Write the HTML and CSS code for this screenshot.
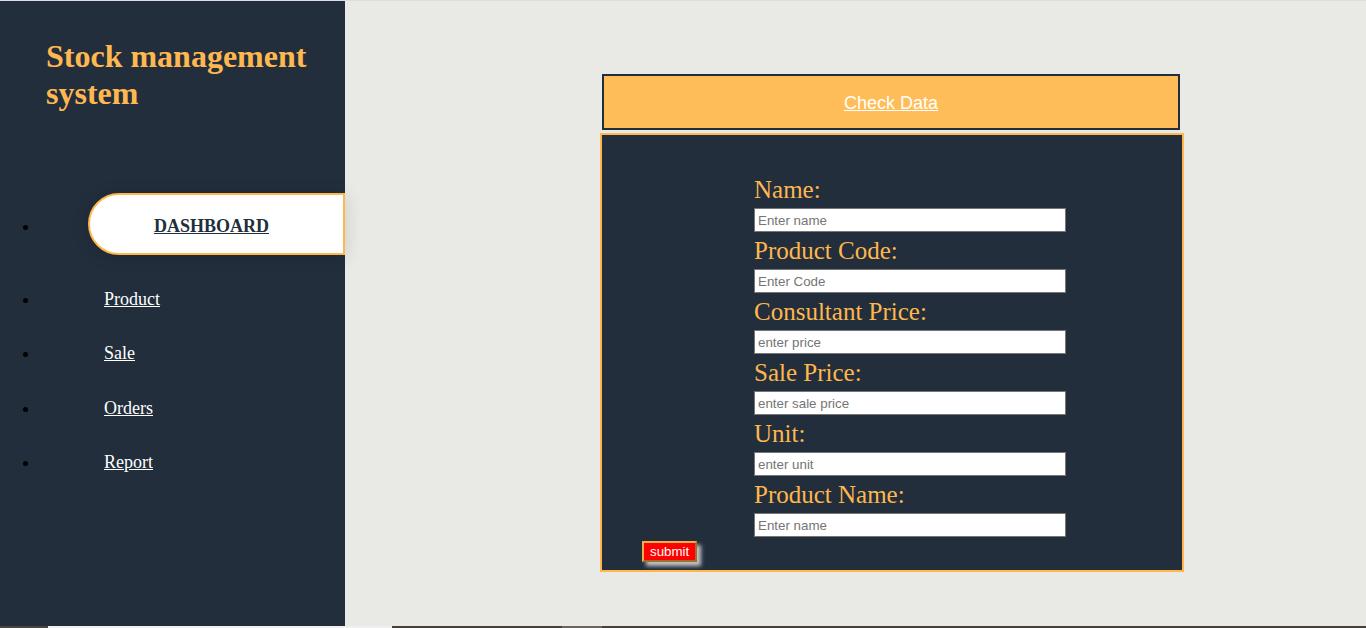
FILE: index.html
```html
<!DOCTYPE html>
<html lang="en">
<head>
<meta charset="utf-8">
<title>Stock management system</title>
<link rel="stylesheet" href="styles.css">
</head>
<body>
<aside class="sidebar">
  <h1 class="brand">Stock management system</h1>
  <ul class="nav">
    <li><a class="nav-link active" href="#">DASHBOARD</a></li>
    <li><a class="nav-link" href="#">Product</a></li>
    <li><a class="nav-link" href="#">Sale</a></li>
    <li><a class="nav-link" href="#">Orders</a></li>
    <li><a class="nav-link" href="#">Report</a></li>
  </ul>
</aside>
<main class="main">
  <div class="check"><a href="#">Check Data</a></div>
  <form class="form">
    <div class="fields">
      <label class="label">Name:</label>
      <input class="input" type="text" placeholder="Enter name">
      <label class="label">Product Code:</label>
      <input class="input" type="text" placeholder="Enter Code">
      <label class="label">Consultant Price:</label>
      <input class="input" type="text" placeholder="enter price">
      <label class="label">Sale Price:</label>
      <input class="input" type="text" placeholder="enter sale price">
      <label class="label">Unit:</label>
      <input class="input" type="text" placeholder="enter unit">
      <label class="label">Product Name:</label>
      <input class="input" type="text" placeholder="Enter name">
    </div>
    <div class="actions"><button class="submit" type="button">submit</button></div>
  </form>
</main>
<div class="hscroll"></div>
</body>
</html>
```
FILE: styles.css
```css
html, body {
  margin: 0;
  padding: 0;
}
body {
  border-top: 1px solid #dcdce2;
  background: #e9e9e6;
  display: flex;
  align-items: flex-start;
  height: calc(100vh - 1px);
  overflow: hidden;
  font-family: "Liberation Serif", "Times New Roman", serif;
}
.sidebar {
  width: 345px;
  flex-shrink: 0;
  height: 100%;
  background: #222e3c;
  position: relative;
  z-index: 1;
}
.brand {
  margin: 37px 20px 0 46px;
  font-size: 32px;
  font-weight: bold;
  color: #ffb84f;
  line-height: normal;
}
.nav {
  margin: 81px 0 0 0;
  padding: 0 0 0 40px;
  color: #000;
  font-size: 18px;
}
.nav li + li {
  margin-top: 33.5px;
}
.nav-link {
  display: block;
  padding-left: 64px;
  font-size: 18px;
  line-height: 21px;
  color: #ffffff;
  text-decoration: underline;
}
.nav-link.active {
  margin-left: 48px;
  padding: 21px 0 16px 64px;
  background: #ffffff;
  border: 2px solid #ffb74d;
  border-radius: 31px 0 0 31px;
  color: #222e3c;
  font-weight: bold;
  box-shadow: 0 2px 18px rgba(0, 0, 0, 0.14);
}
.main {
  flex: 1;
  padding-top: 73px;
}
.check {
  margin-left: 257px;
  width: 578px;
  box-sizing: border-box;
  border: 2px solid #222e3c;
  background: #ffbd5a;
  text-align: center;
  padding: 17px 0 14px;
  line-height: 21px;
}
.check a {
  font-family: "Liberation Sans", Arial, sans-serif;
  font-size: 18px;
  color: #ffffff;
  text-decoration: underline;
}
.form {
  margin: 3px 0 0 255px;
  width: 584px;
  box-sizing: border-box;
  border: 2px solid #ffb74d;
  background: #222e3c;
  padding: 40px 0 8px;
}
.fields {
  display: flex;
  flex-direction: column;
  align-items: flex-start;
  margin-left: 152px;
}
.label {
  font-size: 25px;
  line-height: 29px;
  color: #ffb74d;
}
.input {
  margin: 4px 0;
  width: 312px;
  height: 24px;
  box-sizing: border-box;
  border: 1px solid #767676;
  border-radius: 0;
  padding: 0 3px;
  background: #ffffff;
  font-family: "Liberation Sans", Arial, sans-serif;
  font-size: 13.33px;
  color: #000;
}
.input::placeholder {
  color: #757575;
}
.actions {
  padding-left: 40px;
}
.submit {
  display: block;
  margin: 0;
  padding: 1px 6px;
  border: 2px outset #f2ac48;
  background: #ff0000;
  color: #ffffff;
  font-family: "Liberation Sans", Arial, sans-serif;
  font-size: 13.33px;
  line-height: 15px;
  box-shadow: 4px 4px 4px #c4c4c4;
}
.hscroll {
  position: fixed;
  left: 0;
  right: 0;
  bottom: 0;
  height: 2px;
  z-index: 5;
  background: linear-gradient(to right, #4a463d 0, #4a463d 48px, #f0f0f0 48px, #f0f0f0 392px, #45413a 392px, #45413a 562px, #6a6560 562px, #6a6560 602px, #45413a 602px);
}
```
